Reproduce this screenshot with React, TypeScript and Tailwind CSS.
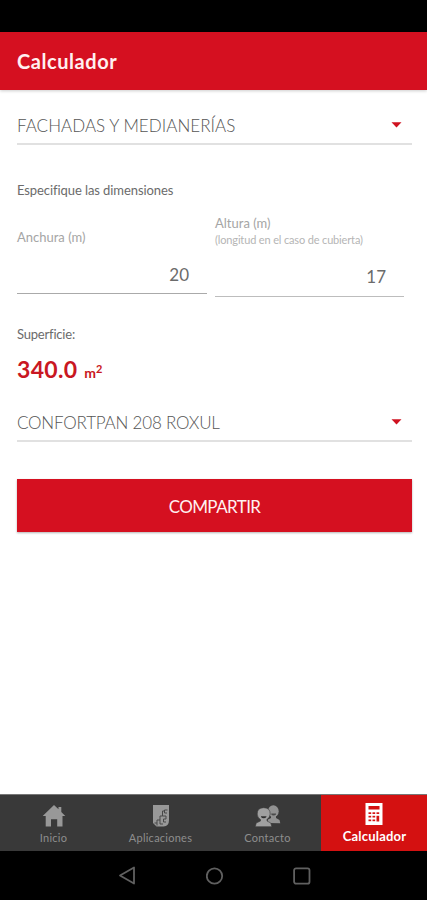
import type { ReactNode } from "react";

const HomeIcon = () => (
  <svg width="24" height="22" viewBox="0 0 24 22" fill="#989898">
    <path d="M12 0 L16.5 4.3 V2 H19.3 V7 L23.3 11 H20.5 V21.5 H15.2 V14.3 H9 V21.5 H3.7 V11 H0.7 Z" />
  </svg>
);

const AppsIcon = () => (
  <svg width="18" height="22" viewBox="0 0 18 22">
    <path d="M1 0 H17 V15 Q17 21 11.5 21.5 H4.5 L1 18 Z" fill="#989898" />
    <path
      d="M15.5 5 H12.5 V8 H15 M12.5 6 H10.5 V11 H8 V15 H5 V18 H2.5 M10.5 11 H14 V14 H11.5 V17 H14 M8 15 V19 H11 M5 18 V20.5"
      fill="none"
      stroke="#484848"
      strokeWidth="1"
    />
  </svg>
);

const ContactIcon = () => (
  <svg width="26" height="22" viewBox="0 0 26 22">
    <g fill="#929292">
      <path d="M12 18 L13 14.5 L16 13 V11 H21 V13 L24.5 15 L25.3 18.3 Z" />
      <ellipse cx="18.3" cy="6.3" rx="5.4" ry="6.1" />
    </g>
    <path d="M16.3 8.5 H21 V9.5 Q20 10.5 18.5 10.5 Q17 10.5 16.3 9.5 Z" fill="#4a4a4a" />
    <path
      d="M0.3 21.7 L1.2 18 L5.5 16 V14.5 Q2.3 12.5 2.2 9 Q2.2 2.7 8.7 2.7 Q15.2 2.7 15.2 9 Q15 12.5 12 14.5 V16 L15.8 18 L16.8 21.7 Z"
      fill="#a0a0a0"
      stroke="#393939"
      strokeWidth="0.6"
    />
    <path d="M6 11.2 H11.4 V12 Q10.5 13.2 8.7 13.2 Q6.9 13.2 6 12 Z" fill="#303030" />
  </svg>
);

const CalculatorIcon = () => (
  <svg width="18" height="22" viewBox="0 0 18 22">
    <rect x="0.5" width="17" height="22" fill="#fff" />
    <g fill="#d41111">
      <rect x="3.5" y="3" width="11" height="3.5" />
      <rect x="3.5" y="9.3" width="2.7" height="1.7" />
      <rect x="7.5" y="9.3" width="2.7" height="1.7" />
      <rect x="11.5" y="9.3" width="2.7" height="1.7" />
      <rect x="3.5" y="12.8" width="2.7" height="1.7" />
      <rect x="7.5" y="12.8" width="2.7" height="1.7" />
      <rect x="11.5" y="12.8" width="2.7" height="5.7" />
      <rect x="3.5" y="16.5" width="2.7" height="1.7" />
      <rect x="7.5" y="16.5" width="2.7" height="1.7" />
    </g>
  </svg>
);

const NAV_LIST = [
  { name: "Inicio", icon: HomeIcon },
  { name: "Aplicaciones", icon: AppsIcon },
  { name: "Contacto", icon: ContactIcon },
];

const Select = ({ children }: { children: ReactNode }) => (
  <div className="flex h-[39px] items-center justify-between border-b-2 border-[#e1e1e1] pr-[10px] text-[17px] font-light text-[#555]">
    {children}
    <svg width="11" height="6" viewBox="0 0 11 6" fill="#cf1220">
      <path d="M0.5 0.3 H10.5 L5.5 5.5 Z" />
    </svg>
  </div>
);

const App = () => {
  return (
    <div className="flex h-[900px] w-[427px] flex-col bg-white font-['Lato',sans-serif]">
      <div className="h-8 bg-black" />
      <header className="flex h-[58px] items-center bg-[#d51020] px-[17px] text-[20px] font-bold text-[#fff0f0] shadow-[0_1px_3px_rgba(0,0,0,0.2)]">
        <span className="tracking-[0.55px]">Calculador</span>
      </header>
      <main className="flex flex-1 flex-col pl-[17px] pr-[15px] pt-4">
        <Select>
          <span className="pt-[3px] tracking-[0.04px]">FACHADAS Y MEDIANERÍAS</span>
        </Select>
        <p className="mt-[35px] text-[13px] leading-5 tracking-[-0.08px] text-[#6b6b6b]">Especifique las dimensiones</p>
        <div className="mt-3 flex gap-2">
          <div className="flex h-[82px] w-[190px] flex-col border-b border-[#aaa] pr-[18px] pt-4">
            <span className="text-[13px] leading-[18px] text-[#a5a5a5]">Anchura (m)</span>
            <span className="mt-[19px] self-end text-[17px] leading-5 text-[#6b6b6b]">20</span>
          </div>
          <div className="flex h-[85px] w-[189px] flex-col border-b border-[#bdbdbd] pr-[18px] pt-[2px]">
            <span className="text-[13px] leading-[18px] text-[#a5a5a5]">Altura (m)</span>
            <span className="whitespace-nowrap text-[11px] leading-4 tracking-[-0.15px] text-[#b5b5b5]">
              (longitud en el caso de cubierta)
            </span>
            <span className="mt-[19px] self-end text-[17px] leading-5 text-[#6b6b6b]">17</span>
          </div>
        </div>
        <p className="mt-[27px] text-[13px] leading-5 tracking-[-0.2px] text-[#6b6b6b]">Superficie:</p>
        <div className="mt-[11px] flex h-7 items-baseline gap-[7px] font-bold leading-7 text-[#c91722]">
          <span className="text-[23px] tracking-[0.3px]">340.0</span>
          <span className="text-[14px]">
            m<sup className="-top-[5px] text-[11px] leading-none">2</sup>
          </span>
        </div>
        <div className="mt-5">
          <Select>
            <span className="pt-[2px] tracking-[-0.2px]">CONFORTPAN 208 ROXUL</span>
          </Select>
        </div>
        <button className="mt-[37px] h-[53px] bg-[#d51020] pt-[2px] text-[17px] tracking-[-0.6px] text-[#fff0f0] shadow-[0_1px_2px_rgba(0,0,0,0.3)]">
          COMPARTIR
        </button>
      </main>
      <nav className="flex h-[57px] border-t border-[#777] bg-[#393939]">
        {NAV_LIST.map((item) => (
          <div key={item.name} className="flex w-[107px] flex-col items-center pt-[10px] text-[#8e8e8e]">
            <item.icon />
            <span className="mt-[3px] text-[11px] leading-4 tracking-[0.25px]">{item.name}</span>
          </div>
        ))}
        <div className="flex w-[106px] flex-col items-center bg-[#d41111] pt-2 text-white">
          <CalculatorIcon />
          <span className="mt-[3px] pl-px text-[13px] font-bold leading-4 tracking-[0.2px]">Calculador</span>
        </div>
      </nav>
      <footer className="flex h-[49px] items-center justify-between bg-black pl-[118px] pr-[116px]">
        <svg width="18" height="19" viewBox="0 0 18 19" fill="none" stroke="#606060" strokeWidth="1.8">
          <path d="M16 1.5 V17.5 L2 9.5 Z" strokeLinejoin="round" />
        </svg>
        <svg width="18" height="18" viewBox="0.5 0 18 18" fill="none" stroke="#606060" strokeWidth="1.8">
          <circle cx="9" cy="9" r="7.7" />
        </svg>
        <svg width="18" height="18" viewBox="0 0 18 18" fill="none" stroke="#606060" strokeWidth="1.8">
          <rect x="1.1" y="1.3" width="15.4" height="15.4" rx="2" />
        </svg>
      </footer>
    </div>
  );
};

export default App;
